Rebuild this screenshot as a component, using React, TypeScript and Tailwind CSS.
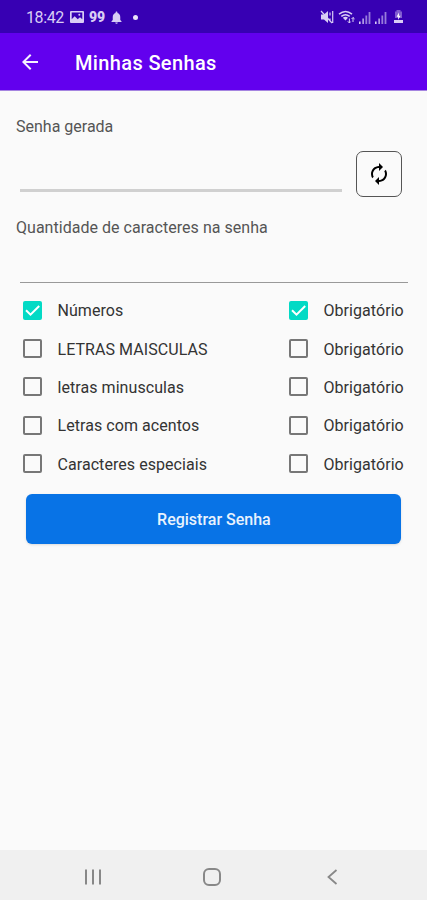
import { FC, useState } from "react";
import { MdArrowBack, MdAutorenew, MdNotifications } from "react-icons/md";

const initialOptions = [
  { label: "Números", enabled: true, required: true },
  { label: "LETRAS MAISCULAS", enabled: false, required: false },
  { label: "letras minusculas", enabled: false, required: false },
  { label: "Letras com acentos", enabled: false, required: false },
  { label: "Caracteres especiais", enabled: false, required: false },
];

const SignalIcon: FC = () => (
  <svg width="12" height="13" viewBox="0 0 12 13" fill="currentColor">
    <path d="M0 10.5h1.6V13H0z" />
    <path d="M3.3 7.5H5V13H3.3z" opacity=".75" />
    <path d="M6.4 4.5h1.8V13H6.4z" opacity=".6" />
    <path d="M9.6 1h1.8v12H9.6z" opacity=".6" />
  </svg>
);

const StatusBar: FC = () => (
  <div className="flex h-[33px] items-center bg-[#3700b3] pt-px pr-[23px] pl-[26px] text-[#d9cdf5]">
    <span className="w-[44px] pt-px text-[16px] leading-none tracking-[-0.4px]">
      18:42
    </span>
    <svg width="14" height="12" viewBox="0 0 14 12">
      <path
        d="M1 0h12a1 1 0 0 1 1 1v10a1 1 0 0 1-1 1H1a1 1 0 0 1-1-1V1a1 1 0 0 1 1-1zM1.7 1.6v6.6l3-3 3 3 2.3-2 2.3 2V1.6z"
        fill="currentColor"
        fillRule="evenodd"
      />
      <circle cx="9.3" cy="3.7" r="1" fill="currentColor" />
    </svg>
    <span className="ml-[5px] w-[16px] text-[14px] leading-none font-black">
      99
    </span>
    <MdNotifications className="ml-[4px] size-[15px]" />
    <span className="ml-[9px] size-[5px] rounded-full bg-[#e9e2fa]" />

    <div className="ml-auto flex items-center">
      <svg width="14" height="14" viewBox="0 0 14 14">
        <path d="M1 4.5h3L8 1v12L4 9.5H1z" fill="currentColor" />
        <path
          d="M1 1l11 12M10 2.5v3M10 8.5v3M12.7 1v12"
          fill="none"
          stroke="currentColor"
          strokeWidth="1.2"
        />
      </svg>
      <svg className="ml-[4px]" width="18" height="14" viewBox="0 0 18 14">
        <path
          d="M1 4.2Q7.5-1.2 14 4.2M3.3 6.4Q7.5 3 11.7 6.4"
          fill="none"
          stroke="currentColor"
          strokeWidth="1.5"
        />
        <path d="M4.8 7.8Q7.5 5.8 10 7.8L7.5 10.5z" fill="currentColor" />
        <path
          d="M11.4 13V8.5M9.8 11.3l1.6 1.7 1.2-1.4M15 7.5V12M13.5 9l1.5-1.5L16.6 9"
          fill="none"
          stroke="currentColor"
          strokeWidth="1"
        />
      </svg>
      <div className="ml-[3px] flex gap-[4px]">
        <SignalIcon />
        <SignalIcon />
      </div>
      <svg className="ml-[6px]" width="11" height="14" viewBox="0 0 11 14">
        <path d="M3.5 0h4v1.5H9V8H2V1.5h1.5z" fill="currentColor" opacity=".45" />
        <path d="M1 10h9v3H1z" fill="currentColor" />
        <path d="M6 2.5L3.6 6.7h1.7L5 10l2.6-4.3H5.9z" fill="#fff" />
      </svg>
    </div>
  </div>
);

type CheckboxProps = {
  label: string;
  checked: boolean;
  onChange: () => void;
};

const Checkbox: FC<CheckboxProps> = ({ label, checked, onChange }) => (
  <label className="flex items-center text-[16px] tracking-[0.06px] text-[#333]">
    <input
      type="checkbox"
      className="sr-only"
      checked={checked}
      onChange={onChange}
    />
    {checked ? (
      <span className="flex size-[19px] items-center justify-center rounded-[2px] bg-[#03dac5]">
        <svg width="19" height="19" viewBox="0 0 19 19" fill="none">
          <path d="M3 9.3l4.5 4.4L16.2 5" stroke="#fff" strokeWidth="2" />
        </svg>
      </span>
    ) : (
      <span className="size-[19px] rounded-[2px] border-2 border-[#777]" />
    )}
    <span className="ml-[15.5px] pt-[2px] leading-none">{label}</span>
  </label>
);

const App: FC = () => {
  const [options, setOptions] = useState(initialOptions);

  const toggle = (index: number, key: "enabled" | "required") => {
    setOptions(
      options.map((item, i) =>
        i === index ? { ...item, [key]: !item[key] } : item
      )
    );
  };

  return (
    <div className="flex h-[900px] w-[427px] flex-col overflow-hidden bg-[#fafafa] font-['Roboto',sans-serif]">
      <StatusBar />

      <header className="flex h-[58px] items-center border-b border-[#a584e0] bg-[#6200ee] pl-[18px] text-white">
        <button className="text-[#f5f0fe]">
          <MdArrowBack className="size-[24px]" />
        </button>
        <h1 className="ml-[33px] pt-[2px] text-[20px] font-medium tracking-[0.36px]">
          Minhas Senhas
        </h1>
      </header>

      <main className="flex flex-1 flex-col">
        <div className="flex h-[115px] pt-[26px] pl-4">
          <div className="flex w-[340px] flex-col">
            <label className="text-[16px] leading-[20px] text-[#555]">
              Senha gerada
            </label>
            <input
              className="ml-1 h-[55px] w-[322px] border-b-[3px] border-[#d0d0d0] outline-none"
              readOnly
            />
          </div>
          <button className="mt-[34px] flex size-[46px] items-center justify-center rounded-[7px] border border-[#555] text-black">
            <MdAutorenew className="size-[24px]" />
          </button>
        </div>

        <div className="flex flex-col pt-[12px] pl-4">
          <label className="text-[16px] leading-[20px] tracking-[0.03px] text-[#555]">
            Quantidade de caracteres na senha
          </label>
          <input className="ml-1 h-[45px] w-[388px] border-b-[1.5px] border-[#999] outline-none" />
        </div>

        <div className="mt-[8px] flex flex-col">
          {options.map((item, index) => (
            <div
              key={item.label}
              className="grid h-[38.4px] grid-cols-[266px_1fr] items-center pl-[23px]"
            >
              <Checkbox
                label={item.label}
                checked={item.enabled}
                onChange={() => toggle(index, "enabled")}
              />
              <Checkbox
                label="Obrigatório"
                checked={item.required}
                onChange={() => toggle(index, "required")}
              />
            </div>
          ))}
        </div>

        <button className="mr-[25.6px] ml-[26.4px] mt-[11px] h-[50px] rounded-[6px] bg-[#0873e6] pt-[2px] text-[16px] font-medium text-[#e8f2fd] shadow-sm">
          Registrar Senha
        </button>
      </main>

      <nav className="flex h-[50px] items-center bg-[#f0f0f0] pt-[3px] text-[#888]">
        <svg className="ml-[84px]" width="18" height="18" viewBox="0 0 18 18">
          <path
            d="M2 1.5v15M9 1.5v15M16 1.5v15"
            stroke="currentColor"
            strokeWidth="2"
          />
        </svg>
        <span className="ml-[101px] size-[18px] rounded-[6px] border-2 border-[#888]" />
        <svg
          className="ml-[105px]"
          width="12"
          height="18"
          viewBox="0 0 12 18"
          fill="none"
        >
          <path d="M10.5 2L2.5 9l8 7" stroke="currentColor" strokeWidth="1.8" />
        </svg>
      </nav>
    </div>
  );
};

export default App;
